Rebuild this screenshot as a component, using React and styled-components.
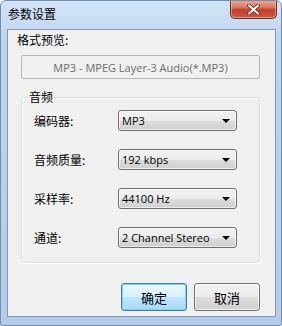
import { Fragment } from "react";
import styled, { createGlobalStyle } from "styled-components";

const Global = createGlobalStyle`
  html, body {
    margin: 0;
    padding: 0;
    background: #ffffff;
  }
  body {
    font-family: "Open Sans", "Noto Sans CJK SC", sans-serif;
    font-size: 12px;
    color: #000;
  }
`;

const Window = styled.div`
  width: 282px;
  height: 326px;
  box-sizing: border-box;
  border: 1px solid #6d8fb5;
  border-radius: 6px 6px 2px 2px;
  background: linear-gradient(180deg, #d3e4f6 0%, #bed5ee 12%, #b4cce8 100%);
  display: flex;
  flex-direction: column;
  padding: 0 5px 8px 6px;
  overflow: hidden;
`;

const TitleBar = styled.div`
  height: 28px;
  flex-shrink: 0;
  display: flex;
  align-items: flex-start;
  justify-content: space-between;
  margin-right: -1px;
`;

const Title = styled.span`
  font-family: "Noto Sans CJK SC", sans-serif;
  font-size: 12px;
  line-height: 16px;
  margin-top: 5px;
  margin-left: 1px;
`;

const CloseButton = styled.div`
  width: 47px;
  height: 19px;
  margin-top: -1px;
  box-sizing: border-box;
  border: 1px solid #6e2a20;
  border-top: none;
  border-radius: 0 0 5px 5px;
  background: linear-gradient(180deg, #e9ad9c 0%, #d87a64 40%, #c23e27 55%, #d0583e 100%);
  box-shadow: inset 0 0 0 1px rgba(255, 210, 195, 0.5);
  display: flex;
  align-items: center;
  justify-content: center;
`;

const Client = styled.div`
  flex: 1;
  border: 1px solid #7f98b4;
  background: #f0f0f0;
  display: flex;
  flex-direction: column;
  padding: 2px 15px 0 13px;
`;

const Caption = styled.div`
  font-family: "Noto Sans CJK SC", sans-serif;
  font-size: 12px;
  line-height: 16px;
  margin-left: -4px;
`;

const Preview = styled.div`
  margin-top: 7px;
  height: 24px;
  box-sizing: border-box;
  border: 1px solid #b3b7ba;
  border-radius: 2px;
  background: #f0f0f0;
  color: #6d6d6d;
  display: flex;
  align-items: center;
  justify-content: center;
  font-size: 11px;
`;

const Group = styled.div`
  position: relative;
  margin-top: 18px;
  height: 166px;
  box-sizing: border-box;
  border: 1px solid #d5dfe5;
  border-radius: 3px;
  box-shadow: inset 1px 1px 0 #ffffff, 1px 1px 0 #ffffff;
  padding: 12px 0 0 12px;
  display: grid;
  grid-template-columns: 84px 119px;
  grid-auto-rows: 21px;
  row-gap: 18px;
  align-items: center;
`;

const Legend = styled.span`
  position: absolute;
  top: -9px;
  left: 6px;
  padding: 0 1px;
  background: #f0f0f0;
  font-family: "Noto Sans CJK SC", sans-serif;
  font-size: 12px;
  line-height: 16px;
`;

const Label = styled.span`
  font-family: "Noto Sans CJK SC", sans-serif;
  font-size: 12px;
  line-height: 16px;
`;

const Select = styled.div`
  height: 21px;
  box-sizing: border-box;
  border: 1px solid #707070;
  border-radius: 3px;
  background: linear-gradient(180deg, #f2f2f2 0%, #ebebeb 50%, #dddddd 51%, #cfcfcf 100%);
  box-shadow: inset 0 0 0 1px rgba(255, 255, 255, 0.6);
  display: flex;
  align-items: center;
  justify-content: space-between;
  padding: 0 6px 0 3px;
  font-size: 11px;
`;

const Arrow = styled.span`
  width: 0;
  height: 0;
  border-left: 4px solid transparent;
  border-right: 4px solid transparent;
  border-top: 4px solid #000;
`;

const Footer = styled.div`
  margin-top: 20px;
  display: flex;
  justify-content: flex-end;
  gap: 7px;
`;

const Button = styled.div`
  width: 66px;
  height: 28px;
  box-sizing: border-box;
  border: 1px solid ${(p) => (p.$primary ? "#3c7fb1" : "#707070")};
  border-radius: 3px;
  background: ${(p) =>
    p.$primary
      ? "linear-gradient(180deg, #eaf6fd 0%, #d9f0fc 50%, #bee6fd 51%, #a7d9f5 100%)"
      : "linear-gradient(180deg, #f2f2f2 0%, #ebebeb 50%, #dddddd 51%, #cfcfcf 100%)"};
  box-shadow: ${(p) =>
    p.$primary ? "inset 0 0 0 1px #7fd2f5" : "inset 0 0 0 1px rgba(255,255,255,0.7)"};
  display: flex;
  align-items: center;
  justify-content: center;
  font-family: "Noto Sans CJK SC", sans-serif;
  font-size: 13px;
`;

const rows = [
  ["编码器:", "MP3"],
  ["音频质量:", "192 kbps"],
  ["采样率:", "44100 Hz"],
  ["通道:", "2 Channel Stereo"],
];

export default function App() {
  return (
    <>
      <Global />
      <Window>
        <TitleBar>
          <Title>参数设置</Title>
          <CloseButton>
            <svg width="13" height="11" viewBox="0 0 13 11">
              <path
                d="M2 1.5 L11 9.5 M11 1.5 L2 9.5"
                stroke="#5a1c14"
                strokeWidth="3.6"
                strokeLinecap="round"
              />
              <path
                d="M2 1.5 L11 9.5 M11 1.5 L2 9.5"
                stroke="#ffffff"
                strokeWidth="2.2"
                strokeLinecap="round"
              />
            </svg>
          </CloseButton>
        </TitleBar>
        <Client>
          <Caption>格式预览:</Caption>
          <Preview>MP3 - MPEG Layer-3 Audio(*.MP3)</Preview>
          <Group>
            <Legend>音频</Legend>
            {rows.map(([label, value]) => (
              <Fragment key={label}>
                <Label>{label}</Label>
                <Select>
                  <span>{value}</span>
                  <Arrow />
                </Select>
              </Fragment>
            ))}
          </Group>
          <Footer>
            <Button $primary>确定</Button>
            <Button>取消</Button>
          </Footer>
        </Client>
      </Window>
    </>
  );
}
